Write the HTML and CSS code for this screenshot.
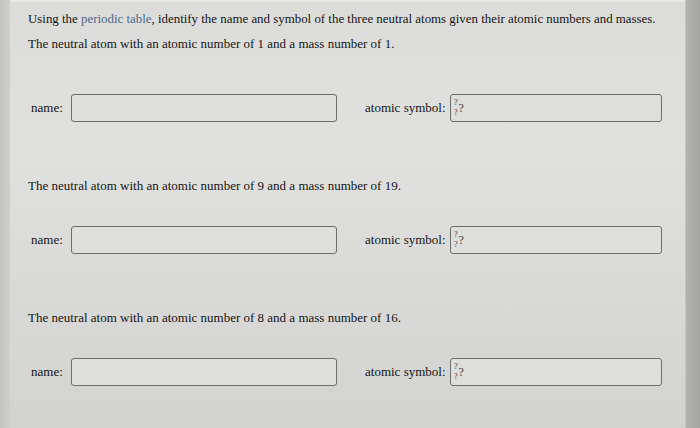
FILE: index.html
```html
<!DOCTYPE html>
<html>
<head>
<meta charset="utf-8">
<link rel="stylesheet" href="styles.css">
</head>
<body>
<div class="screen">
  <div class="edge-left"></div>
  <div class="panel">
    <p class="intro">Using the <span class="link">periodic table</span>, identify the name and symbol of the three neutral atoms given their atomic numbers and masses.</p>
    <p class="q q-first">The neutral atom with an atomic number of 1 and a mass number of 1.</p>
    <div class="row row-first">
      <span class="lbl lbl-name">name:</span>
      <div class="field field-name"></div>
      <span class="lbl lbl-sym">atomic symbol:</span>
      <div class="field field-sym"><span class="iso"><span class="iso-stack"><span>?</span><span>?</span></span><span class="iso-main">?</span></span></div>
    </div>
    <p class="q">The neutral atom with an atomic number of 9 and a mass number of 19.</p>
    <div class="row">
      <span class="lbl lbl-name">name:</span>
      <div class="field field-name"></div>
      <span class="lbl lbl-sym">atomic symbol:</span>
      <div class="field field-sym"><span class="iso"><span class="iso-stack"><span>?</span><span>?</span></span><span class="iso-main">?</span></span></div>
    </div>
    <p class="q">The neutral atom with an atomic number of 8 and a mass number of 16.</p>
    <div class="row">
      <span class="lbl lbl-name">name:</span>
      <div class="field field-name"></div>
      <span class="lbl lbl-sym">atomic symbol:</span>
      <div class="field field-sym"><span class="iso"><span class="iso-stack"><span>?</span><span>?</span></span><span class="iso-main">?</span></span></div>
    </div>
  </div>
  <div class="edge-right"></div>
</div>
</body>
</html>
```

FILE: styles.css
```css
html, body {
  margin: 0;
  padding: 0;
  width: 700px;
  height: 428px;
  overflow: hidden;
}
body {
  font-family: "Liberation Serif", "Times New Roman", serif;
  color: #151515;
  background: #d6d7d5;
}
.screen {
  display: flex;
  width: 700px;
  height: 428px;
}
.edge-left {
  width: 10px;
  background: linear-gradient(to right, #c2c3c1, #cfd0ce);
}
.edge-right {
  width: 14px;
  background: linear-gradient(to right, #b3b4b2, #a4a5a3);
  border-left: 1px solid #c4c5c3;
}
.panel {
  flex: 1;
  padding: 9px 0 0 18px;
  background: linear-gradient(to bottom, #dcdddb 0%, #e0e1df 35%, #d9dad8 70%, #d2d3d1 100%);
  border-top: 2px solid #e6e7e5;
  box-sizing: border-box;
}
p {
  margin: 0;
  font-size: 13px;
  line-height: 16px;
}
.intro {
  font-size: 12.9px;
}
.link {
  color: #4d6a88;
}
.q {
  margin-top: 56px;
}
.q-first {
  margin-top: 9px;
}
.row {
  display: flex;
  align-items: center;
  margin-top: 32px;
}
.row-first {
  margin-top: 42px;
}
.lbl {
  font-size: 13px;
}
.lbl-name {
  margin-left: 3px;
  width: 40px;
}
.lbl-sym {
  margin-left: 28px;
  width: 85px;
}
.field {
  height: 26px;
  border: 1.5px solid #6d6e6c;
  border-radius: 3px;
  background: #dedfdd;
  box-sizing: content-box;
}
.field-name {
  width: 264px;
}
.field-sym {
  width: 210px;
  display: flex;
  align-items: center;
}
.iso {
  display: inline-flex;
  align-items: center;
  margin-left: 3px;
  color: #3a3a3a;
}
.iso-stack {
  display: inline-flex;
  flex-direction: column;
  font-size: 8px;
  line-height: 10px;
  margin-right: 1px;
}
.iso-main {
  font-size: 12px;
  line-height: 14px;
}
```
